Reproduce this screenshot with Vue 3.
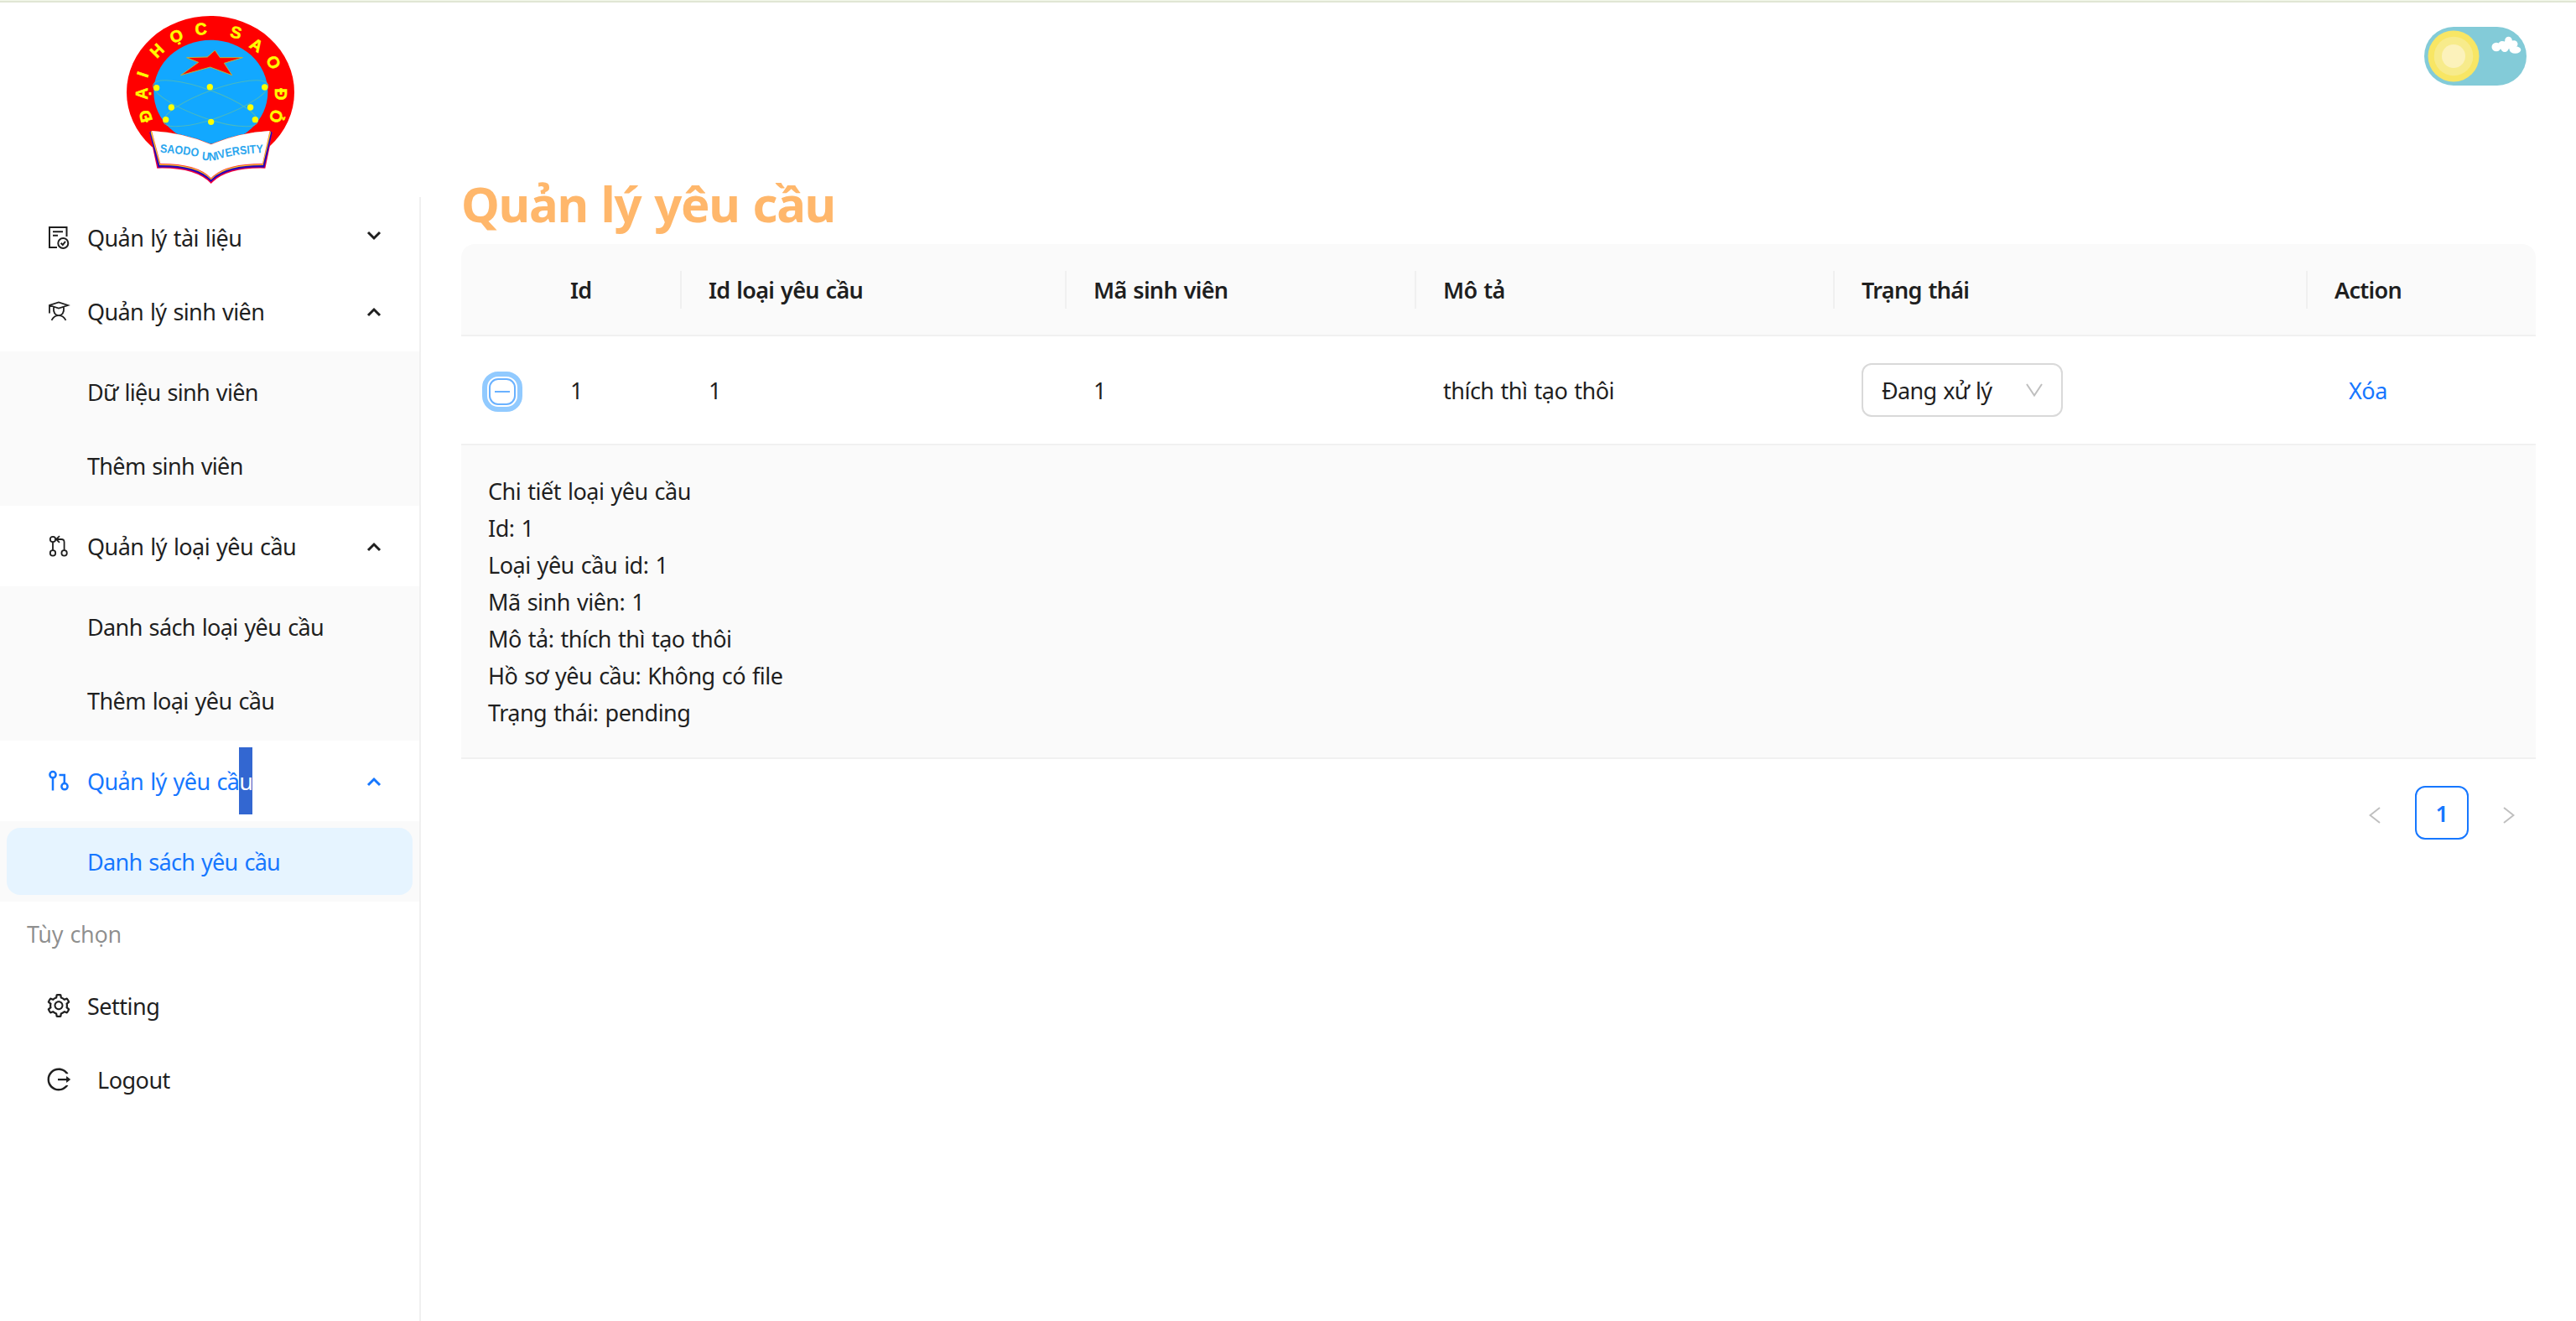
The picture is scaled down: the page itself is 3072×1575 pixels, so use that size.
<script setup>
const menu = [
  { icon: 'doc', label: 'Quản lý tài liệu', open: false, ls: -0.58, children: [] },
  {
    icon: 'student', label: 'Quản lý sinh viên', open: true, ls: -0.62,
    children: [{ label: 'Dữ liệu sinh viên', ls: -0.67 }, { label: 'Thêm sinh viên', ls: -0.67 }],
  },
  {
    icon: 'branch', label: 'Quản lý loại yêu cầu', open: true, ls: -0.56,
    children: [{ label: 'Danh sách loại yêu cầu', ls: -0.63 }, { label: 'Thêm loại yêu cầu', ls: -0.6 }],
  },
  {
    icon: 'pull', label: 'Quản lý yêu cầ', marked: 'u', open: true, active: true, ls: -0.6,
    children: [{ label: 'Danh sách yêu cầu', selected: true, ls: -0.7 }],
  },
]
const columns = ['', 'Id', 'Id loại yêu cầu', 'Mã sinh viên', 'Mô tả', 'Trạng thái', 'Action']
const details = [
  'Chi tiết loại yêu cầu',
  'Id: 1',
  'Loại yêu cầu id: 1',
  'Mã sinh viên: 1',
  'Mô tả: thích thì tạo thôi',
  'Hồ sơ yêu cầu: Không có file',
  'Trạng thái: pending',
]
const ring = [
  ['Đ', 130, 416, -106], ['Ạ', 116, 335, -90], ['I', 120, 266, -72], ['H', 171, 181, -45],
  ['Ọ', 241, 129, -22], ['C', 329, 103, -4], ['S', 455, 116, 14], ['A', 528, 161, 32],
  ['O', 589, 223, 62], ['Đ', 616, 337, 90], ['Ỏ', 598, 416, 104],
]
const nodes = [[170, 314], [361, 311], [557, 312], [223, 384], [506, 384], [203, 428], [523, 428], [365, 436]]
</script>

<template>
  <div class="page">
    <div class="strip"></div>
    <div class="body">
      <aside class="side">
        <div class="brand">
          <svg class="logo" viewBox="63 57 600 600">
            <ellipse cx="363" cy="330" rx="300" ry="273" fill="#f00" />
            <ellipse cx="364" cy="329" rx="204" ry="186" fill="#12a8ff" />
            <g fill="none" stroke="#49b9c0" stroke-width="3">
              <ellipse rx="198" ry="50" transform="translate(345 370) rotate(20)" />
              <ellipse rx="198" ry="50" transform="translate(382 370) rotate(-20)" />
            </g>
            <circle v-for="(n, i) in nodes" :key="i" :cx="n[0]" :cy="n[1]" r="11" fill="#ff0" />
            <path d="M379 180L397 206L478 206L412 226L440 269L362 240L257 269L320 223L278 206L352 204Z" fill="#f00" stroke="#b9b33b" stroke-width="3" />
            <text v-for="(c, i) in ring" :key="'c' + i" class="ring-char" dy="21" :transform="`translate(${c[1]} ${c[2]}) rotate(${c[3]})`">{{ c[0] }}</text>
            <path d="M144 470L172 602Q310 598 365 657Q420 598 559 602L586 472L576 468Q460 475 365 516Q270 475 152 468Z" fill="#f4003c" />
            <path d="M145 474L176 599Q310 594 365 651Q420 594 556 599L584 474L576 468Q460 475 365 516Q270 475 152 468Z" fill="#2a00b8" />
            <path d="M149 474L181 591Q315 590 365 643Q415 590 551 591L579 474L576 468Q460 475 365 516Q270 475 152 468Z" fill="#f3d028" />
            <path d="M152 468L183 588Q318 587 365 640Q412 587 549 588L576 468Q460 475 365 516Q270 475 152 468Z" fill="#f33" />
            <path d="M153 468Q270 475 365 517Q460 475 575 468L549 585Q412 585 365 637Q318 585 184 585Z" fill="#fff" />
            <path id="motto-left" d="M182 545Q260 549 322 562" fill="none" />
            <path id="motto-right" d="M331 571Q372 579 400 567Q450 551 556 546" fill="none" />
            <text class="motto"><textPath href="#motto-left" textLength="138" lengthAdjust="spacingAndGlyphs">SAODO</textPath></text>
            <text class="motto"><textPath href="#motto-right" textLength="224" lengthAdjust="spacingAndGlyphs">UNIVERSITY</textPath></text>
          </svg>
        </div>

        <nav class="menu">
          <template v-for="m in menu" :key="m.icon">
            <div class="item" :class="{ active: m.active }">
              <svg v-if="m.icon === 'doc'" class="icon" viewBox="0 0 28 28">
                <path d="M12 26H3V2H23.5V13M7 7.3H19M7 11.7H13" />
                <circle cx="19.3" cy="21" r="6" /><path d="M16.6 20.8L18.8 23L22 18.8" />
              </svg>
              <svg v-else-if="m.icon === 'student'" class="icon thin" viewBox="0 0 28 28">
                <path d="M3 16.5V7L14 3.4L25 7L14 10.6L3 7M8 9.5C7.3 16 10 19.2 14 19.2S20.7 16 20 9.5M5.5 24.8Q8.5 19.2 14 19.2T22.5 24.8" />
              </svg>
              <svg v-else-if="m.icon === 'branch'" class="icon thin" viewBox="0 0 28 28">
                <circle cx="7" cy="6" r="3.2" /><circle cx="7" cy="22.4" r="3.2" /><circle cx="20.6" cy="22.4" r="3.2" />
                <path d="M7 9.2V19.2M20.6 19.2V9.5Q20.6 6 17.1 6H11M15 2.2L11 6L15 9.8" />
              </svg>
              <svg v-else class="icon bold" viewBox="0 0 28 28">
                <circle cx="7" cy="6.7" r="3.6" /><circle cx="21" cy="20.7" r="3.6" />
                <path d="M7 10.3V25.5M14.5 7H20.8V17" />
              </svg>
              <span class="label" :class="{ tall: m.marked }" :style="{ letterSpacing: m.ls + 'px' }">{{ m.label }}<span v-if="m.marked" class="mark">{{ m.marked }}</span></span>
              <svg class="caret" :class="{ down: !m.open }" viewBox="0 0 18 12"><path d="M2 10L9 3L16 10" /></svg>
            </div>
            <div v-if="m.children.length" class="sub">
              <div v-for="c in m.children" :key="c.label" class="item child" :class="{ selected: c.selected }">
                <span class="label" :style="{ letterSpacing: c.ls + 'px' }">{{ c.label }}</span>
              </div>
            </div>
          </template>
          <div class="group">Tùy chọn</div>
          <div class="item">
            <svg class="icon solid" viewBox="0 0 1024 1024"><path d="M924.8 625.7l-65.5-56c3.1-19 4.7-38.4 4.7-57.8s-1.6-38.8-4.7-57.8l65.5-56a32.03 32.03 0 009.3-35.2l-.9-2.6a443.74 443.74 0 00-79.7-137.9l-1.8-2.1a32.12 32.12 0 00-35.1-9.5l-81.3 28.9c-30-24.6-63.5-44-99.7-57.6l-15.7-85a32.05 32.05 0 00-25.8-25.7l-2.7-.5c-52.1-9.4-106.9-9.4-159 0l-2.7.5a32.05 32.05 0 00-25.8 25.7l-15.8 85.4a351.86 351.86 0 00-99 57.4l-81.9-29.1a32 32 0 00-35.1 9.5l-1.8 2.1a446.02 446.02 0 00-79.7 137.9l-.9 2.6c-4.5 12.5-.8 26.5 9.3 35.2l66.3 56.6c-3.1 18.8-4.6 38-4.6 57.1 0 19.2 1.5 38.4 4.6 57.1L99 625.5a32.03 32.03 0 00-9.3 35.2l.9 2.6c18.1 50.4 44.9 96.9 79.7 137.9l1.8 2.1a32.12 32.12 0 0035.1 9.5l81.9-29.1c29.8 24.5 63.1 43.9 99 57.4l15.8 85.4a32.05 32.05 0 0025.8 25.7l2.7.5a449.4 449.4 0 00159 0l2.7-.5a32.05 32.05 0 0025.8-25.7l15.7-85a350 350 0 0099.7-57.6l81.3 28.9a32 32 0 0035.1-9.5l1.8-2.1c34.8-41.1 61.6-87.5 79.7-137.9l.9-2.6c4.5-12.3.8-26.3-9.3-35zM788.3 465.9c2.5 15.1 3.8 30.6 3.8 46.1s-1.3 31-3.8 46.1l-6.6 40.1 74.7 63.9a370.03 370.03 0 01-42.6 73.6L721 702.8l-31.4 25.8c-23.9 19.6-50.5 35-79.3 45.8l-38.1 14.3-17.9 97a377.5 377.5 0 01-85 0l-17.9-97.2-37.8-14.5c-28.5-10.8-55-26.2-78.7-45.7l-31.4-25.9-93.4 33.2c-17-22.9-31.2-47.6-42.6-73.6l75.5-64.5-6.5-40c-2.4-14.9-3.7-30.3-3.7-45.5 0-15.3 1.2-30.6 3.7-45.5l6.5-40-75.5-64.5c11.3-26.1 25.6-50.7 42.6-73.6l93.4 33.2 31.4-25.9c23.7-19.5 50.2-34.9 78.7-45.7l37.9-14.3 17.9-97.2c28.1-3.2 56.8-3.2 85 0l17.9 97 38.1 14.3c28.7 10.8 55.4 26.2 79.3 45.8l31.4 25.8 92.8-32.9c17 22.9 31.2 47.6 42.6 73.6L781.8 426l6.5 39.9zM512 326c-97.2 0-176 78.8-176 176s78.8 176 176 176 176-78.8 176-176-78.8-176-176-176zm79.2 255.2A111.6 111.6 0 01512 614c-29.9 0-58-11.7-79.2-32.8A111.6 111.6 0 01400 502c0-29.9 11.7-58 32.8-79.2C454 401.6 482.1 390 512 390c29.9 0 58 11.6 79.2 32.8A111.6 111.6 0 01624 502c0 29.9-11.7 58-32.8 79.2z" /></svg>
            <span class="label">Setting</span>
          </div>
          <div class="item logout">
            <svg class="icon solid" viewBox="0 0 1024 1024"><path d="M868 732h-70.3c-4.8 0-9.3 2.1-12.3 5.8-7 8.5-14.5 16.7-22.4 24.5a353.84 353.84 0 01-112.7 75.9A352.8 352.8 0 01512.4 866c-47.9 0-94.3-9.4-137.9-27.8a353.84 353.84 0 01-112.7-75.9 353.28 353.28 0 01-76-112.5C167.3 606.2 158 559.9 158 512s9.4-94.2 27.8-137.8c17.8-42.1 43.4-80 76-112.5s70.5-58.1 112.7-75.9c43.6-18.4 90-27.8 137.9-27.8 47.9 0 94.3 9.3 137.9 27.8 42.2 17.8 80.1 43.4 112.7 75.9 7.9 7.9 15.3 16.1 22.4 24.5 3 3.7 7.6 5.8 12.3 5.8H868c6.3 0 10.2-7 6.7-12.3C798 160.5 663.8 81.6 511.3 82 271.7 82.6 79.6 277.1 82 516.4 84.4 751.9 276.2 942 512.4 942c152.1 0 285.7-78.8 362.3-197.7 3.4-5.3-.4-12.3-6.7-12.3zm88.9-226.3L815 393.7c-5.3-4.2-13-.4-13 6.3v76H488c-4.4 0-8 3.6-8 8v56c0 4.4 3.6 8 8 8h314v76c0 6.7 7.8 10.5 13 6.3l141.9-112a8 8 0 000-12.6z" /></svg>
            <span class="label">Logout</span>
          </div>
        </nav>
      </aside>

      <main class="main">
        <div class="top">
          <svg class="toggle" viewBox="0 0 122 70">
            <rect width="122" height="70" rx="35" fill="#83cbd8" />
            <circle cx="35" cy="35" r="30.5" fill="#f8e664" />
            <circle cx="35" cy="35" r="23.3" fill="#f7eb8b" />
            <circle cx="35" cy="35" r="14" fill="#fcf2bb" />
            <g fill="#fff">
              <ellipse cx="86" cy="24" rx="5.5" ry="5.2" /><ellipse cx="93" cy="22" rx="5" ry="5" />
              <ellipse cx="96" cy="25.5" rx="4.5" ry="4.5" /><ellipse cx="100.5" cy="16" rx="4.3" ry="4.3" />
              <ellipse cx="101" cy="21" rx="7" ry="5.5" /><ellipse cx="107" cy="20.5" rx="4.5" ry="4.3" />
              <ellipse cx="108.5" cy="27.5" rx="6.8" ry="4.2" />
            </g>
          </svg>
        </div>
        <h1 class="title">Quản lý yêu cầu</h1>
        <section class="table">
          <div class="row head">
            <div v-for="(c, i) in columns" :key="i" class="cell" :class="{ divided: i > 0 && i < 6 }"><span class="text">{{ c }}</span></div>
          </div>
          <div class="row">
            <div class="cell expander"><span class="minus"></span></div>
            <div class="cell"><span class="text">1</span></div>
            <div class="cell"><span class="text">1</span></div>
            <div class="cell"><span class="text">1</span></div>
            <div class="cell"><span class="text">thích thì tạo thôi</span></div>
            <div class="cell">
              <div class="select">
                <span class="text">Đang xử lý</span>
                <svg viewBox="0 0 20 16"><path d="M1 1L10 14.5L19 1" /></svg>
              </div>
            </div>
            <div class="cell"><a class="text remove">Xóa</a></div>
          </div>
          <div class="details">
            <div v-for="d in details" :key="d">{{ d }}</div>
          </div>
        </section>
        <div class="pager">
          <span class="page-btn"><svg viewBox="0 0 14 20"><path d="M13 1L1.5 10L13 19" /></svg></span>
          <span class="page-btn current">1</span>
          <span class="page-btn"><svg viewBox="0 0 14 20"><path d="M1 1L12.5 10L1 19" /></svg></span>
        </div>
      </main>
    </div>
  </div>
</template>

<style>
body { background: #fff; }
</style>

<style scoped>
.page {
  width: 3072px; height: 1575px; overflow: hidden; display: flex; flex-direction: column;
  font-family: "Noto Sans", "Open Sans", sans-serif; font-size: 27px; line-height: 44px;
  letter-spacing: -0.5px; word-spacing: 1.5px; color: #1f1f1f; background: #fff; box-sizing: border-box;
}
.strip { height: 2px; flex: none; background: #e0e6d4; border-top: 1px solid #f3f8ea; }
.body { flex: 1; display: flex; }
.side { width: 502px; flex: none; display: flex; flex-direction: column; }
.brand { height: 232px; flex: none; padding: 16px 0 0 151px; box-sizing: border-box; }
.logo { width: 200px; height: 200px; display: block; }
.ring-char { font: bold 59px "Liberation Sans", "Noto Sans", sans-serif; letter-spacing: 0; fill: #ff0; stroke: #ff0; stroke-width: 1.5; text-anchor: middle; }
.motto { font: bold 42px "Liberation Sans", sans-serif; letter-spacing: 0; word-spacing: 0; fill: #2ba6ee; }
.menu { flex: 1; border-right: 2px solid #f0f0f0; padding-top: 8px; }
.item { height: 80px; margin: 0 8px 8px; padding: 0 40px 0 48px; display: flex; align-items: center; border-radius: 16px; box-sizing: border-box; }
.icon { width: 28px; height: 28px; margin-right: 20px; flex: none; fill: none; stroke: currentColor; stroke-width: 2; }
.icon.thin { stroke-width: 1.8; }
.icon.bold { stroke-width: 2.5; }
.icon.solid { width: 32px; height: 32px; margin: 0 18px 0 -2px; fill: currentColor; stroke: none; }
.label { white-space: nowrap; padding-top: 2px; }
.label.tall { padding-top: 0; }
.active { color: #1677ff; }
.mark { display: inline-block; height: 80px; line-height: 82px; background: #3367d1; color: #fff; }
.caret { width: 18px; height: 12px; margin: 2px -3px 0 auto; fill: none; stroke: currentColor; stroke-width: 3; }
.caret.down { transform: translateY(-3px) scaleY(-1); }
.sub { background: #fafafa; padding: 8px 0 1px; margin-bottom: 8px; }
.sub .item:last-child { margin-bottom: 7px; }
.child { padding-left: 96px; }
.selected { background: #e6f4ff; color: #1677ff; }
.group { padding: 9px 32px 23px; color: rgba(0, 0, 0, 0.45); letter-spacing: -0.3px; }
.logout .icon.solid { margin-right: 30px; }
.main { flex: 1; padding: 0 48px; display: flex; flex-direction: column; }
.top { height: 198px; display: flex; justify-content: flex-end; align-items: flex-start; padding: 29px 11px 0 0; box-sizing: border-box; }
.toggle { width: 122px; height: 70px; }
.title { margin: 0; height: 90px; line-height: 83px; font-size: 58px; font-weight: 700; letter-spacing: -1.3px; word-spacing: 2px; color: #ffb76b; }
.table { width: 2474px; }
.row { display: grid; grid-template-columns: 98px 165px 459px 417px 499px 564px 272px; border-bottom: 2px solid #f0f0f0; height: 128px; align-items: center; }
.head { height: 108px; background: #fafafa; border-radius: 16px 16px 0 0; font-weight: 600; letter-spacing: -0.7px; }
.cell { padding: 0 32px; white-space: nowrap; }
.text { display: block; padding-top: 2px; }
.head .text { padding-top: 1px; }
.divided { border-right: 2px solid #f0f0f0; }
.expander { padding: 4px 0 0 33px; }
.minus {
  display: flex; align-items: center; justify-content: center; width: 32px; height: 32px; box-sizing: border-box;
  border: 2px solid #69b1ff; border-radius: 11px; outline: 6px solid #91caff; outline-offset: 2px;
}
.minus::before { content: ""; width: 18px; height: 2px; background: #69b1ff; }
.select { width: 240px; height: 64px; box-sizing: border-box; border: 2px solid #d9d9d9; border-radius: 12px; padding: 0 22px; display: flex; align-items: center; justify-content: space-between; letter-spacing: -0.7px; }
.select svg { width: 20px; height: 16px; fill: none; stroke: #bfbfbf; stroke-width: 2; }
.remove { color: #1677ff; margin-left: 17px; }
.details { background: #fafafa; border-bottom: 2px solid #f0f0f0; padding: 33px 32px 31px; }
.pager { display: flex; justify-content: flex-end; gap: 16px; margin-top: 32px; }
.page-btn { width: 64px; height: 64px; box-sizing: border-box; display: flex; align-items: center; justify-content: center; }
.page-btn svg { width: 14px; height: 20px; margin-top: 6px; fill: none; stroke: #bfbfbf; stroke-width: 2; }
.current { border: 2px solid #1677ff; border-radius: 12px; color: #1677ff; font-weight: 600; padding-top: 2px; }
</style>
